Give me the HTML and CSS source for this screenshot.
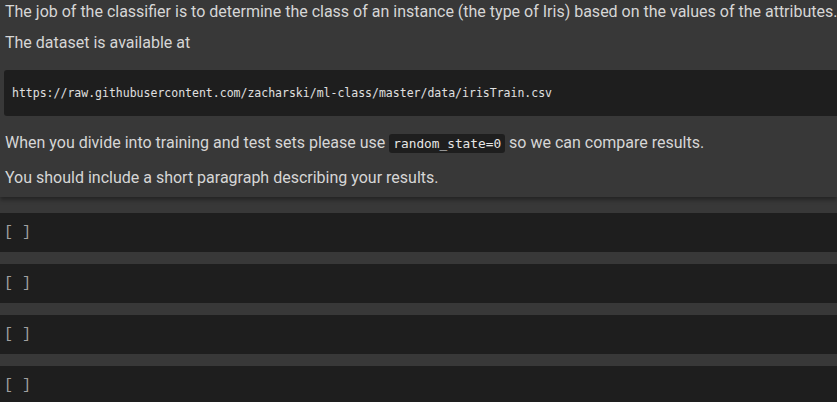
FILE: index.html
```html
<!DOCTYPE html>
<html>
<head>
<meta charset="utf-8">
<link rel="stylesheet" href="styles.css">
</head>
<body>
<div class="text-cell">
  <p class="l1">The job of the classifier is to determine the class of an instance (the type of Iris) based on the values of the attributes.</p>
  <p class="l2">The dataset is available at</p>
  <pre class="codeblock">https://raw.githubusercontent.com/zacharski/ml-class/master/data/irisTrain.csv</pre>
  <p class="l3">When you divide into training and test sets please use <code class="inline">random_state=0</code> so we can compare results.</p>
  <p class="l4">You should include a short paragraph describing your results.</p>
</div>
<div class="cells">
  <div class="code-cell"><span class="prompt">[ ]</span></div>
  <div class="code-cell"><span class="prompt">[ ]</span></div>
  <div class="code-cell"><span class="prompt">[ ]</span></div>
  <div class="code-cell"><span class="prompt">[ ]</span></div>
</div>
</body>
</html>
```
FILE: styles.css
```css
html, body {
  margin: 0;
  padding: 0;
  background: #383838;
  overflow: hidden;
}
body {
  width: 837px;
  height: 402px;
  font-family: Roboto, "Liberation Sans", sans-serif;
  color: #d6d6d6;
}
.text-cell {
  background: #383838;
  padding: 1px 0 8px 5px;
  box-shadow: 0 3px 4px rgba(0,0,0,0.35);
  position: relative;
  white-space: nowrap;
}
.text-cell p {
  margin: 0;
  font-size: 16px;
  line-height: 22px;
}
.l2 { margin-top: 9px !important; }
.l3 { margin-top: 16px !important; }
.l4 { margin-top: 12px !important; }
.codeblock {
  margin: 16px 0 0 -1px;
  background: #1e1e1e;
  border-radius: 3px 0 0 3px;
  height: 46px;
  box-sizing: border-box;
  padding: 0 0 0 8px;
  font-family: "DejaVu Sans Mono", "Liberation Mono", monospace;
  font-size: 11.5px;
  line-height: 46px;
  color: #e0e0e0;
}
.inline {
  font-family: "DejaVu Sans Mono", "Liberation Mono", monospace;
  font-size: 12.8px;
  background: #1e1e1e;
  color: #e6e6e6;
  padding: 2px 4px;
  border-radius: 3px;
}
.cells {
  display: flex;
  flex-direction: column;
  gap: 12px;
  margin-top: 16px;
}
.code-cell {
  background: #1e1e1e;
  height: 39px;
  display: flex;
  align-items: center;
  padding-left: 4px;
}
.prompt {
  font-family: "Liberation Mono", "DejaVu Sans Mono", monospace;
  font-size: 15px;
  color: #a0a0a0;
  white-space: pre;
}
```
